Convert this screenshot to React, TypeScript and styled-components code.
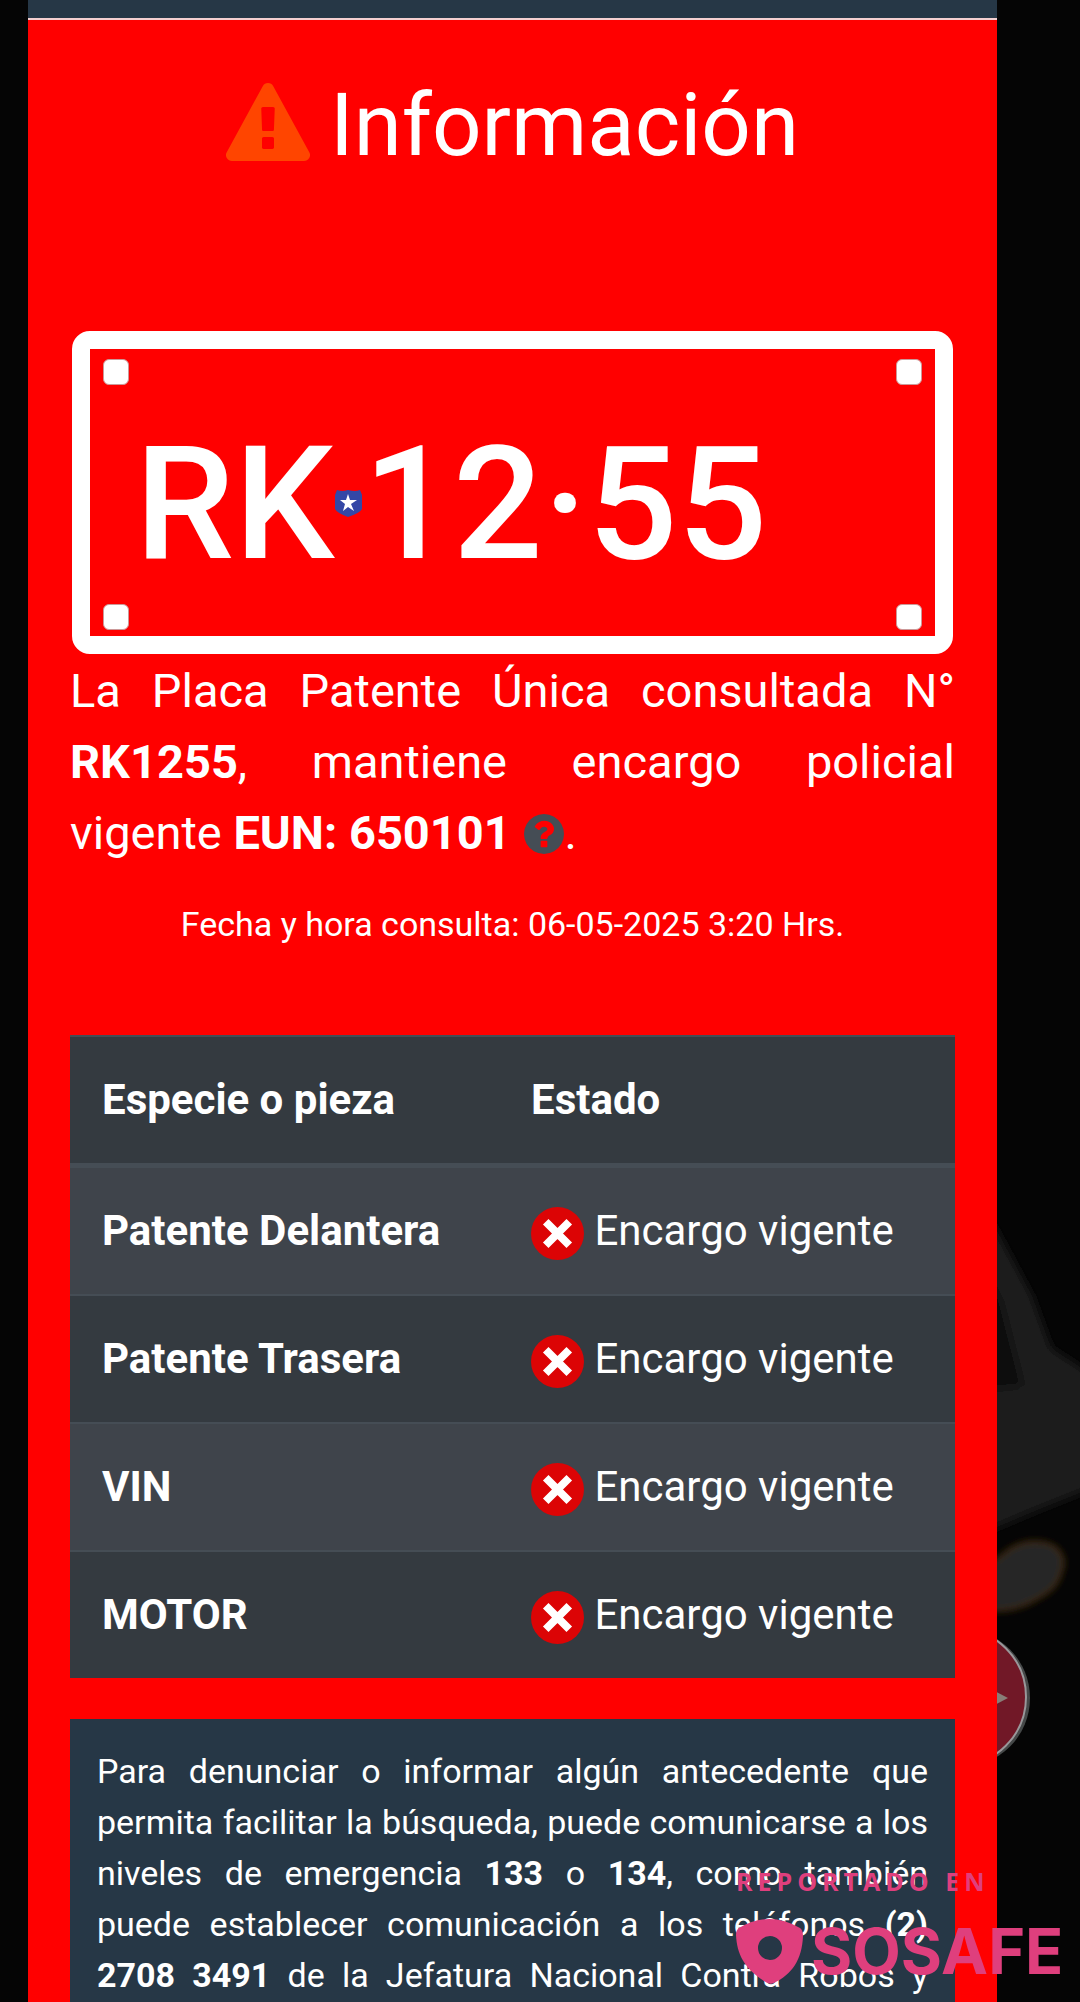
import React from "react";
import styled, { createGlobalStyle } from "styled-components";

const GlobalStyle = createGlobalStyle`
  * { box-sizing: border-box; }
  html, body { margin: 0; height: 100%; background: #050505; }
  #root { height: 100%; }
`;

const Screen = styled.div`
  position: relative;
  height: 100%;
  min-height: 100vh;
  overflow: hidden;
  padding: 0 83px 0 28px;
  background: #050505;
  color: #fff;
  font-family: Roboto, "Liberation Sans", sans-serif;
`;

const Backdrop = styled.svg`
  position: absolute;
  right: 0;
  top: 1160px;
  width: 83px;
  height: 620px;
`;

const Modal = styled.main`
  position: relative;
  min-height: 100%;
  background: #f00;
`;

const TopBar = styled.div`
  height: 20px;
  background: #263746;
  border-bottom: 2px solid #f3cfd0;
`;

const Body = styled.div`
  padding: 53px 42px 0;
`;

const Title = styled.h1`
  display: flex;
  justify-content: center;
  align-items: center;
  gap: 20px;
  margin: 0;
  font-size: 87px;
  line-height: 104px;
  font-weight: 400;
`;

const WarningSvg = styled.svg`
  width: 84px;
  height: 84px;
  fill: #ff4500;
`;

const Plate = styled.section`
  display: flex;
  flex-direction: column;
  justify-content: space-between;
  height: 323px;
  margin: 154px 2px 0;
  padding: 10px 13px 6px;
  border: 18px solid #fff;
  border-radius: 18px;
`;

const BoltRow = styled.div`
  display: flex;
  justify-content: space-between;
`;

const Bolt = styled.span`
  width: 26px;
  height: 26px;
  border: 1px solid #c99;
  border-radius: 6px;
  background: #fff;
`;

const PlateNumber = styled.div`
  display: flex;
  align-items: center;
  padding: 18px 0 0 32px;
  font-size: 158px;
  line-height: 158px;
  font-weight: 500;
`;

const Shield = styled.svg`
  width: 27px;
  height: 27px;
  margin: 0 1px;
`;

const Notice = styled.p`
  margin: 0;
  padding-top: 1px;
  font-size: 47px;
  line-height: 71px;
  text-align: justify;
`;

const HelpButton = styled.button`
  display: inline-block;
  margin-left: 2px;
  padding: 0;
  border: 0;
  background: none;
  vertical-align: -5px;
  line-height: 0;
`;

const HelpSvg = styled.svg`
  width: 40px;
  height: 40px;
  fill: #454d55;
`;

const Timestamp = styled.p`
  margin: 33px 0 88px;
  font-size: 34px;
  line-height: 46px;
  text-align: center;
`;

const Table = styled.table`
  width: 100%;
  border-collapse: collapse;
  background: #343a40;
  font-size: 42px;
  line-height: 62px;
  text-align: left;
`;

const HeadCell = styled.th`
  padding: 32px;
  border-top: 2px solid #454d55;
  border-bottom: 5px solid #454d55;
  font-weight: 700;
`;

const Row = styled.tr<{ $striped: boolean }>`
  background: ${(p) => (p.$striped ? "#3f444b" : "#343a40")};
`;

const PartCell = styled.th`
  width: 429px;
  padding: 32px;
  border-top: 2px solid #454d55;
  font-weight: 700;
`;

const StateCell = styled.td`
  padding: 32px 0 32px 32px;
  border-top: 2px solid #454d55;
`;

const CrossSvg = styled.svg`
  width: 53px;
  height: 53px;
  vertical-align: -15px;
`;

const Info = styled.p`
  margin: 41px 0 0;
  padding: 27px;
  background: #263746;
  font-size: 34px;
  line-height: 51px;
  text-align: justify;
  text-align-last: justify;
`;

const Watermark = styled.aside`
  position: absolute;
  left: 736px;
  bottom: 14px;
  color: #df3f7d;
  font-family: "Open Sans", sans-serif;
`;

const Reported = styled.div`
  margin-bottom: 16px;
  font-size: 25px;
  line-height: 34px;
  font-weight: 700;
  letter-spacing: 5px;
`;

const Brand = styled.div`
  display: flex;
  align-items: center;
  gap: 8px;
  font-family: Inter, sans-serif;
  font-size: 63px;
  line-height: 74px;
  font-weight: 700;
`;

const PinSvg = styled.svg`
  width: 67px;
  height: 66px;
`;

const parts = ["Patente Delantera", "Patente Trasera", "VIN", "MOTOR"];

function WarningIcon() {
  return (
    <WarningSvg viewBox="0 0 1792 1792" aria-hidden="true">
      <path d="M1024 1375v-190q0-14-9.5-23.5t-22.5-9.5h-192q-13 0-22.5 9.5t-9.5 23.5v190q0 14 9.5 23.5t22.5 9.5h192q13 0 22.5-9.5t9.5-23.5zm-2-374l18-459q0-12-10-19-13-11-24-11h-220q-11 0-24 11-10 7-10 21l17 457q0 10 10 16.5t24 6.5h185q14 0 23.5-6.5t10.5-16.5zm-14-934l768 1408q35 63-2 126-17 29-46.5 46t-63.5 17h-1536q-34 0-63.5-17t-46.5-46q-37-63-2-126l768-1408q17-31 47-49t65-18 65 18 47 49z" />
    </WarningSvg>
  );
}

function HelpIcon() {
  return (
    <HelpSvg viewBox="128 128 1536 1536" aria-hidden="true">
      <path d="M1024 1376v-192q0-14-9-23t-23-9h-192q-14 0-23 9t-9 23v192q0 14 9 23t23 9h192q14 0 23-9t9-23zm256-672q0-88-55.5-163t-138.5-116-170-41q-243 0-371 213-15 24 8 42l132 100q7 6 19 6 16 0 25-12 53-68 86-92 34-24 86-24 48 0 85.5 26t37.5 59q0 38-20 61t-68 45q-63 28-115.5 86.5t-52.5 125.5v36q0 14 9 23t23 9h192q14 0 23-9t9-23q0-19 21.5-49.5t54.5-49.5q32-18 49-28.5t46-35 44.5-48 28-60.5 12.5-81zm384 192q0 209-103 385.5t-279.5 279.5-385.5 103-385.5-103-279.5-279.5-103-385.5 103-385.5 279.5-279.5 385.5-103 385.5 103 279.5 279.5 103 385.5z" />
    </HelpSvg>
  );
}

function CrossIcon() {
  return (
    <CrossSvg viewBox="0 0 54 54" aria-hidden="true">
      <circle cx="27" cy="27" r="27" fill="#dc0405" />
      <path d="M15 15L39 39M39 15L15 39" stroke="#fff" strokeWidth="8" />
    </CrossSvg>
  );
}

function Street() {
  return (
    <Backdrop viewBox="0 0 83 620" aria-hidden="true">
      <defs>
        <filter id="soft" x="-30%" y="-30%" width="160%" height="160%">
          <feGaussianBlur stdDeviation="5" />
        </filter>
        <filter id="glow" x="-30%" y="-30%" width="160%" height="160%">
          <feGaussianBlur stdDeviation="3" />
        </filter>
      </defs>
      <g filter="url(#soft)">
        <path d="M-12 50L6 82L35 136L54 188L95 215V328L40 350L-12 372Z" fill="#1e1e1e" />
        <path d="M-12 110L4 140L26 226L-12 230Z" fill="#0a0c0d" />
      </g>
      <path d="M-12 408C5 398 15 381 39 382C62 382 70 398 64 412C60 430 45 436 30 444C15 450 5 451 -12 450Z" fill="#272725" stroke="#3a260a" strokeWidth="4" filter="url(#glow)" />
      <circle cx="-36" cy="538" r="69" fill="#454848" />
      <circle cx="-40" cy="537" r="69" fill="#711827" stroke="#99979a" strokeWidth="2" />
      <path d="M-6 529L11 538L-6 547Z" fill="#887d77" />
    </Backdrop>
  );
}

export default function App() {
  return (
    <>
      <GlobalStyle />
      <Screen>
        <Street />
        <Modal>
          <TopBar />
          <Body>
            <Title>
              <WarningIcon />
              Información
            </Title>
            <Plate>
              <BoltRow><Bolt /><Bolt /></BoltRow>
              <PlateNumber>
                <span>RK</span>
                <Shield viewBox="0 0 27 27" aria-hidden="true">
                  <path d="M2 0Q7 2 13 0Q20 2 25 0L27 5V19Q25 23 13 27Q2 23 0 19V5Z" fill="#3447a6" />
                  <path d="M13 4L15 10H22L16 14L19 21L13 17L8 21L10 14L5 10H11Z" fill="#fff" />
                </Shield>
                <span>12·55</span>
              </PlateNumber>
              <BoltRow><Bolt /><Bolt /></BoltRow>
            </Plate>
            <Notice>
              La Placa Patente Única consultada N° <b>RK1255</b>, mantiene encargo policial
              vigente <b>EUN: 650101</b>{" "}
              <HelpButton type="button" aria-label="Ayuda"><HelpIcon /></HelpButton>.
            </Notice>
            <Timestamp>Fecha y hora consulta: 06-05-2025 3:20 Hrs.</Timestamp>
            <Table>
              <thead>
                <tr>
                  <HeadCell scope="col">Especie o pieza</HeadCell>
                  <HeadCell scope="col">Estado</HeadCell>
                </tr>
              </thead>
              <tbody>
                {parts.map((part, i) => (
                  <Row key={part} $striped={i % 2 === 0}>
                    <PartCell scope="row">{part}</PartCell>
                    <StateCell><CrossIcon /> Encargo vigente</StateCell>
                  </Row>
                ))}
              </tbody>
            </Table>
            <Info>
              Para denunciar o informar algún antecedente que permita facilitar la búsqueda, puede
              comunicarse a los niveles de emergencia <b>133</b> o <b>134</b>, como también puede
              establecer comunicación a los teléfonos <b>(2) 2708 3491</b> de la Jefatura Nacional
              Contra Robos y
            </Info>
          </Body>
        </Modal>
        <Watermark>
          <Reported>REPORTADO EN</Reported>
          <Brand>
            <PinSvg viewBox="0 0 67 66" aria-hidden="true">
              <path fillRule="evenodd" d="M3 10Q33-8 64 10Q67 12 67 18C66 42 56 56 38 65Q33 67 28 63C8 50 1 36 0 17Q0 12 3 10ZM34 18A12 12 0 1 0 34 42A12 12 0 1 0 34 18Z" fill="#df3f7d" />
            </PinSvg>
            SOSAFE
          </Brand>
        </Watermark>
      </Screen>
    </>
  );
}
